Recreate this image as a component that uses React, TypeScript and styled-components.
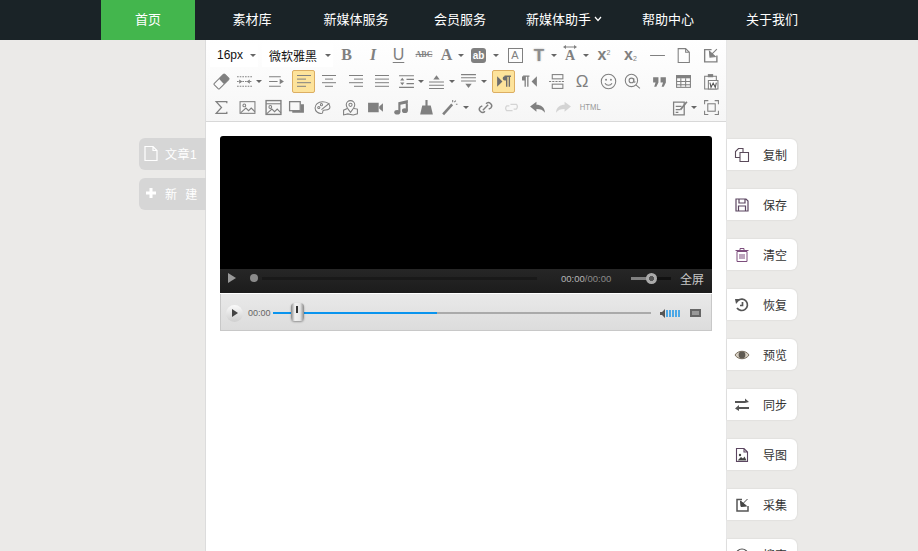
import React from 'react'
import styled, { createGlobalStyle } from 'styled-components'

const GlobalStyle = createGlobalStyle`
  html, body {
    margin: 0;
    height: 100%;
    overflow: hidden;
    background: #ebeae8;
    font-family: "Liberation Sans", "Noto Sans CJK SC", sans-serif;
  }
`

const Page = styled.div`
  height: 551px;
  overflow: hidden;
  display: flex;
  flex-direction: column;
`

const Nav = styled.nav`
  height: 40px;
  flex: none;
  background: #1a2327;
  display: flex;
  gap: 10px;
  padding-left: 101px;
`

const NavItem = styled.a<{ $active?: boolean }>`
  width: 94px;
  box-sizing: border-box;
  padding-bottom: 3px;
  display: flex;
  align-items: center;
  justify-content: center;
  gap: 3px;
  color: #fff;
  font-size: 13px;
  white-space: nowrap;
  background: ${p => (p.$active ? '#43b64d' : 'transparent')};
`

const Body = styled.div`
  flex: 1;
  display: flex;
  min-height: 0;
`

const LeftColumn = styled.div`
  width: 66px;
  padding: 98px 0 0 139px;
  display: flex;
  flex-direction: column;
  gap: 8px;
`

const DocTab = styled.div`
  width: 67px;
  height: 32px;
  z-index: 1;
  box-sizing: border-box;
  padding: 0 0 2px 4px;
  background: #d6d6d6;
  border-radius: 6px 0 0 6px;
  color: #fff;
  font-size: 12px;
  letter-spacing: 0.5px;
  display: flex;
  align-items: center;
  gap: 6px;
  white-space: pre;
`

const Editor = styled.main`
  width: 522px;
  flex: none;
  box-sizing: border-box;
  background: #fff;
  border-left: 1px solid #dcdcdc;
  border-right: 1px solid #e6e6e6;
`

const Toolbar = styled.div`
  height: 82px;
  box-sizing: border-box;
  padding: 2px 0 0 4px;
  background: linear-gradient(#fff, #f6f6f6);
  border-bottom: 1px solid #d8d8d8;
`

const ToolRow = styled.div`
  height: 26px;
  display: flex;
  align-items: center;
`

const Select = styled.div<{ $w: number; $mr?: number }>`
  width: ${p => p.$w}px;
  height: 24px;
  margin-right: ${p => p.$mr ?? 0}px;
  box-sizing: border-box;
  padding-left: 7px;
  background: #fff;
  display: flex;
  align-items: center;
  justify-content: space-between;
  font-size: 12px;
  color: #111;
`

const Slot = styled.span<{ $w: number; $active?: boolean }>`
  width: ${p => p.$w}px;
  height: 23px;
  flex: none;
  box-sizing: border-box;
  display: flex;
  align-items: center;
  justify-content: center;
  color: #808080;
  border-radius: 2px;
  background: ${p => (p.$active ? '#fde39b' : 'transparent')};
  border: ${p => (p.$active ? '1px solid #dcae63' : 'none')};
`

const Caret = styled.span<{ $w?: number }>`
  width: ${p => p.$w ?? 10}px;
  flex: none;
  display: flex;
  justify-content: center;
  &::after {
    content: '';
    border: 3px solid transparent;
    border-top: 3px solid #666;
    border-bottom: 0;
  }
`

const Gap = styled.span<{ $w: number }>`
  width: ${p => p.$w}px;
  flex: none;
`

const Letter = styled.span<{ $size?: number; $serif?: boolean; $bold?: boolean; $italic?: boolean; $under?: boolean; $strike?: boolean }>`
  font-family: ${p => (p.$serif ? '"Liberation Serif", serif' : '"Liberation Sans", sans-serif')};
  font-size: ${p => p.$size ?? 16}px;
  font-weight: ${p => (p.$bold ? 700 : 400)};
  font-style: ${p => (p.$italic ? 'italic' : 'normal')};
  text-decoration: ${p => (p.$under ? 'underline' : p.$strike ? 'line-through' : 'none')};
  text-underline-offset: 2px;
  line-height: 1;
  color: #808080;
`

const BlurT = styled(Letter)`
  color: #8c8c8c;
  text-shadow: 0 0 2px #aaa;
`

const Stack = styled.span`
  display: flex;
  flex-direction: column;
  align-items: center;
  margin-top: -3px;
`

const AbBadge = styled.span`
  width: 15px;
  height: 15px;
  border-radius: 3px;
  background: #808080;
  color: #fff;
  font-size: 10px;
  font-weight: 700;
  display: flex;
  align-items: center;
  justify-content: center;
`

const BoxedA = styled.span`
  width: 13px;
  height: 13px;
  border: 1px solid #808080;
  color: #808080;
  font-size: 11px;
  display: flex;
  align-items: center;
  justify-content: center;
`

const ScriptLetter = styled.span`
  font-size: 16px;
  font-weight: 700;
  color: #808080;
  line-height: 1;
  sup, sub {
    font-size: 7px;
    font-weight: 400;
    line-height: 0;
  }
  sup {
    vertical-align: 5px;
  }
  sub {
    vertical-align: -1px;
  }
`

const HtmlLabel = styled.span`
  font-size: 9px;
  color: #999;
  transform: scaleX(0.85);
`

const Content = styled.div`
  padding: 14px 14px 0;
`

const VideoPlayer = styled.div`
  height: 157px;
  background: #000;
  border-radius: 3px 3px 0 0;
  display: flex;
  flex-direction: column;
  justify-content: flex-end;
`

const VideoBar = styled.div`
  height: 24px;
  box-sizing: border-box;
  padding-bottom: 6px;
  background: linear-gradient(#262626, #1c1c1c);
  display: flex;
  align-items: center;
  color: #aaa;
`

const VideoPlay = styled.div`
  width: 23px;
  flex: none;
  display: flex;
  align-items: center;
  justify-content: center;
`

const Triangle = styled.span<{ $color: string; $size: number }>`
  border-style: solid;
  border-color: transparent;
  border-width: ${p => p.$size}px 0 ${p => p.$size}px ${p => Math.round(p.$size * 1.5)}px;
  border-left-color: ${p => p.$color};
`

const SeekDot = styled.span`
  width: 8px;
  height: 8px;
  margin-left: 7px;
  flex: none;
  border-radius: 50%;
  background: #8a8a8a;
`

const SeekTrack = styled.span`
  width: 275px;
  height: 3px;
  margin-left: 4px;
  flex: none;
  background: #191919;
`

const VideoTime = styled.span`
  margin-left: 24px;
  width: 70px;
  flex: none;
  font-size: 9.5px;
  color: #8a8a8a;
  b {
    color: #b5b5b5;
    font-weight: 400;
  }
`

const VideoVolume = styled.span`
  position: relative;
  width: 40px;
  height: 3px;
  flex: none;
  background: linear-gradient(to right, #808080 50%, #111 50%);
  &::after {
    content: '';
    position: absolute;
    left: 15px;
    top: -4px;
    width: 11px;
    height: 11px;
    border-radius: 50%;
    background: radial-gradient(#555 30%, #aaa 35%);
  }
`

const FullScreen = styled.span`
  margin-left: 9px;
  font-size: 12px;
  color: #c8c8c8;
`

const AudioPlayer = styled.div`
  height: 37px;
  margin-top: 1px;
  box-sizing: border-box;
  background: linear-gradient(#e9e9e9, #dcdcdc);
  border: 1px solid #c8c8c8;
  border-top: 0;
  display: flex;
  align-items: center;
  padding: 2px 0 0 5px;
`

const AudioPlay = styled.span`
  width: 17px;
  height: 17px;
  flex: none;
  border-radius: 50%;
  background: linear-gradient(#fafafa, #cfcfcf);
  display: flex;
  align-items: center;
  justify-content: center;
  padding-left: 1px;
  box-sizing: border-box;
`

const AudioTime = styled.span`
  margin-left: 5px;
  width: 25px;
  flex: none;
  font-size: 9px;
  color: #666;
`

const AudioTrack = styled.span`
  position: relative;
  width: 378px;
  height: 2px;
  flex: none;
  background: linear-gradient(to right, #0a94ee 43.4%, #aaa 43.4%);
`

const AudioHandle = styled.span`
  position: absolute;
  left: 18px;
  top: -9px;
  width: 13px;
  height: 18px;
  border-radius: 4px;
  background: linear-gradient(to right, #8a8a8a, #f2f2f2 30%, #e6e6e6 70%, #8a8a8a);
  box-shadow: 0 1px 2px rgba(0, 0, 0, 0.35);
  &::after {
    content: '';
    position: absolute;
    left: 5px;
    top: 3px;
    width: 2px;
    height: 7px;
    background: #333;
  }
`

const AudioIcon = styled.svg`
  flex: none;
  margin-left: 9px;
`

const RightColumn = styled.aside`
  padding-top: 99px;
  display: flex;
  flex-direction: column;
  gap: 19px;
`

const ActionButton = styled.div`
  width: 70px;
  height: 31px;
  flex: none;
  box-sizing: border-box;
  padding-left: 7px;
  background: #fff;
  border-radius: 0 6px 6px 0;
  box-shadow: 0 0 2px rgba(0, 0, 0, 0.12);
  display: flex;
  align-items: center;
  font-size: 12px;
  color: #333;
`

const ActionLabel = styled.span`
  margin: 0 0 1px 13px;
`

const Svg: React.FC<{ size?: number; children: React.ReactNode }> = ({ size = 17, children }) => (
  <svg width={size} height={size} viewBox="0 0 16 16" fill="none" stroke="#808080" strokeWidth="1">
    {children}
  </svg>
)

const Lines: React.FC<{ rows: [number, number][] }> = ({ rows }) => (
  <Svg size={16}>
    {rows.map(([a, b], i) => (
      <path key={i} d={`M${a} ${2.5 + i * 3.6}H${b}`} />
    ))}
  </Svg>
)

const solid = { fill: '#808080', stroke: 'none' }

const icons: Record<string, React.ReactNode> = {
  eraser: (
    <Svg>
      <g transform="rotate(-45 8 8)">
        <rect x="1" y="4.5" width="14" height="7" rx="1" />
        <rect x="8" y="4.5" width="7" height="7" rx="1" {...solid} />
      </g>
    </Svg>
  ),
  rowSpace: (
    <Svg>
      <path d="M1 3.5H15M1 12.5H15M1 8H3M6 8H10M13 8H15" strokeDasharray="1.5 1" />
      <path d="M3 6V10L6 8ZM13 6V10L10 8Z" {...solid} />
    </Svg>
  ),
  indent: (
    <Svg>
      <path d="M1 3.5H12M1 8H9M1 12.5H12" />
      <path d="M11 5.5V10.5L15 8Z" {...solid} />
    </Svg>
  ),
  alignLeft: <Lines rows={[[1, 15], [1, 10], [1, 15], [1, 10]]} />,
  alignCenter: <Lines rows={[[1, 15], [4, 12], [1, 15], [4, 12]]} />,
  alignRight: <Lines rows={[[1, 15], [6, 15], [1, 15], [6, 15]]} />,
  justify: <Lines rows={[[1, 15], [1, 15], [1, 15], [1, 15]]} />,
  lineHeight: (
    <Svg>
      <path d="M1 2.5H15M8 6H15M8 10H15M1 13.5H15" />
      <path d="M2 7L4 4.5L6 7ZM2 9L4 11.5L6 9Z" {...solid} />
    </Svg>
  ),
  spaceBefore: (
    <Svg>
      <path d="M1 8.5H15M1 11.5H15M1 14.5H15" />
      <path d="M5 6L8 2L11 6Z" {...solid} />
    </Svg>
  ),
  spaceAfter: (
    <Svg>
      <path d="M1 1.5H15M1 4.5H15M1 7.5H15" />
      <path d="M5 10L8 14L11 10Z" {...solid} />
    </Svg>
  ),
  ltr: (
    <Svg>
      <path d="M2 3V13L7 8Z" fill="#6d6d6d" stroke="none" />
      <path d="M9 3H15M11 3V13M13.5 3V13" stroke="#6d6d6d" strokeWidth="1.3" />
      <path d="M9 3H11V7H9.5A2 2 0 0 1 9 3Z" fill="#6d6d6d" stroke="none" />
    </Svg>
  ),
  rtl: (
    <Svg>
      <path d="M14 3V13L9 8Z" {...solid} />
      <path d="M1 3H7M3 3V13M5.5 3V13" strokeWidth="1.2" />
      <path d="M1 3H3V7H1.5A2 2 0 0 1 1 3Z" {...solid} />
    </Svg>
  ),
  imageCenter: (
    <Svg>
      <rect x="4" y="1.5" width="10" height="4" />
      <rect x="4" y="10.5" width="10" height="4" />
      <path d="M1 8H15" strokeDasharray="2 1" />
    </Svg>
  ),
  smile: (
    <Svg>
      <circle cx="8" cy="8" r="6.8" />
      <circle cx="5.7" cy="6.3" r=".9" {...solid} />
      <circle cx="10.3" cy="6.3" r=".9" {...solid} />
      <path d="M4.7 9.7C6 12.2 10 12.2 11.3 9.7" />
    </Svg>
  ),
  search: (
    <Svg>
      <circle cx="7" cy="7" r="5.8" />
      <circle cx="7" cy="7" r="2.2" />
      <path d="M9.2 5V8.2Q10 9.4 10.6 8M11.2 11.2L15 14.5" />
    </Svg>
  ),
  quote: (
    <Svg>
      <path d="M2 4H7V9L5 13H3L4.3 9H2ZM9 4H14V9L12 13H10L11.3 9H9Z" {...solid} />
    </Svg>
  ),
  table: (
    <Svg>
      <rect x="1.5" y="2.5" width="13" height="11" />
      <path d="M1 2H15V5H1Z" {...solid} />
      <path d="M1.5 8H14.5M1.5 11H14.5M5.5 5V13M10 5V13" />
    </Svg>
  ),
  pasteWord: (
    <Svg>
      <path d="M2.5 3H13.5V15H2.5Z" />
      <path d="M5.5 1H10.5V4H5.5Z" {...solid} />
      <path d="M6 7H15V15H6Z" fill="#fff" />
      <path d="M7.5 9L8.5 13.5L10.5 9.5L12.5 13.5L13.5 9" stroke="#555" />
    </Svg>
  ),
  minus: (
    <Svg>
      <path d="M1 8H15" />
    </Svg>
  ),
  page: (
    <Svg>
      <path d="M3 1.5H10L13.5 5V14.5H3ZM10 1.5V5H13.5" />
    </Svg>
  ),
  collect: (
    <Svg>
      <path d="M9 2.5H2.5V14H14V8" strokeWidth="1.3" />
      <path d="M14 2L9.5 6.5M7 4L7.5 9.5L12.5 9Z" {...solid} stroke="#808080" />
    </Svg>
  ),
  sigma: (
    <Svg>
      <path d="M13 4V2.5H3L8 8L3 13.5H13V12" strokeWidth="1.2" />
    </Svg>
  ),
  image: (
    <Svg>
      <rect x="1" y="2.5" width="14" height="11" />
      <circle cx="5" cy="6" r="1.3" />
      <path d="M1.5 13L6.5 8.5L9 11L11.5 8.5L15 12" />
    </Svg>
  ),
  multiImage: (
    <Svg>
      <rect x="1" y="1.5" width="14" height="13" strokeWidth="1.3" />
      <path d="M1 4.5H15" />
      <circle cx="5" cy="7.5" r="1.3" />
      <path d="M1.5 14L6.5 9.5L9 12L11.5 9.5L15 13" />
    </Svg>
  ),
  frame: (
    <Svg>
      <rect x="1.5" y="2.5" width="10" height="8.5" strokeWidth="1.2" />
      <path d="M12 5H15V13H4V11H12Z" {...solid} />
    </Svg>
  ),
  palette: (
    <Svg>
      <path d="M8 2.5C3.8 2.5 1 5.3 1 8.5C1 12 4.5 14 7.5 13.5C9 13.2 7.5 11 9 10.5C11 10 15 11 15 7.5C15 4.5 12 2.5 8 2.5Z" />
      <circle cx="4.5" cy="8" r="1" />
      <circle cx="7" cy="5.3" r="1" />
      <path d="M7 10L14.5 4" />
    </Svg>
  ),
  map: (
    <Svg>
      <path d="M5 9L1.5 10.5V15L5.5 14L10.5 15L14.5 14V9.5L11 9" />
      <path d="M8 12.5C5 9 4 7.5 4 5.5A4 4 0 0 1 12 5.5C12 7.5 11 9 8 12.5Z" />
      <circle cx="8" cy="5.5" r="1.5" />
    </Svg>
  ),
  video: (
    <Svg>
      <path d="M1 3.5H11V12.5H1ZM11.5 7L15 4V12L11.5 9Z" {...solid} />
    </Svg>
  ),
  music: (
    <Svg>
      <path d="M5 3L14 1V4L7 5.5V12.5H5ZM12 3.5H14V11H12Z" {...solid} />
      <ellipse cx="4" cy="12.5" rx="2.8" ry="2.2" {...solid} />
      <ellipse cx="11.2" cy="11" rx="2.8" ry="2.2" {...solid} />
    </Svg>
  ),
  broom: (
    <Svg>
      <path d="M7 1H9V6H12L14 14.5H2L4 6H7Z" {...solid} />
    </Svg>
  ),
  wand: (
    <Svg>
      <path d="M2 14.5L10.5 5" strokeWidth="2.4" />
      <path d="M11 1V3M14 5H15.5M12.5 3L14 1.5" />
    </Svg>
  ),
  link: (
    <Svg>
      <path d="M8.5 4.5A3 3 0 0 1 13 8.5L11 9.5M7.5 11.5A3 3 0 0 1 3 7.5L5 6.5M5.5 10.5L10.5 5.5" strokeWidth="1.3" />
    </Svg>
  ),
  unlink: (
    <svg width="17" height="17" viewBox="0 0 16 16" fill="none" stroke="#d4d4d4" strokeWidth="1.2">
      <path d="M7 5H12.5A3 3 0 0 1 12.5 9.5H10M9 11H3.5A3 3 0 0 1 3.5 6.5H6" />
    </svg>
  ),
  undo: (
    <Svg>
      <path d="M1 7L7 2.5V5.5C11 5.5 15 8 15 13C13 10.5 11 9.5 7 9.5V12Z" {...solid} />
    </Svg>
  ),
  redo: (
    <svg width="17" height="17" viewBox="0 0 16 16" fill="#d4d4d4">
      <path d="M15 7L9 2.5V5.5C5 5.5 1 8 1 13C3 10.5 5 9.5 9 9.5V12Z" />
    </svg>
  ),
  template: (
    <Svg>
      <path d="M1.5 3H11.5V15H1.5ZM3.5 7H9M3.5 10H8M3.5 12.5H6" strokeWidth="1.2" />
      <path d="M8 10L14 2.5" strokeWidth="1.6" />
    </Svg>
  ),
  fullscreen: (
    <Svg>
      <path d="M1.5 5V1.5H5M11 1.5H14.5V5M14.5 11V14.5H11M5 14.5H1.5V11" />
      <rect x="4.5" y="4.5" width="7" height="7" />
    </Svg>
  ),
}

const actionIcons: Record<string, React.ReactNode> = {
  copy: (
    <svg width="16" height="16" viewBox="0 0 16 16" fill="none" stroke="#5a4a5a" strokeWidth="1.1">
      <path d="M6.5 5.5H14.5V14.5H6V5.5ZM6 10.5H1.5V4.5L4.5 1.5H9V5.5" />
    </svg>
  ),
  save: (
    <svg width="16" height="16" viewBox="0 0 16 16" fill="none" stroke="#5b4560" strokeWidth="1.2">
      <path d="M2 2H12L14 4V14H2ZM5 2V6H11V2M4.5 14V9H11.5V14" />
    </svg>
  ),
  trash: (
    <svg width="16" height="16" viewBox="0 0 16 16" fill="none" stroke="#7c4d7c" strokeWidth="1">
      <path d="M3 4.5H13V14.5H3ZM1.5 3.5H14.5M6 3.5V1.5H10V3.5M6 7V12M8 7V12M10 7V12" />
    </svg>
  ),
  restore: (
    <svg width="16" height="16" viewBox="0 0 16 16" fill="none" stroke="#555" strokeWidth="2">
      <path d="M4 3.5A5.7 5.7 0 1 1 3 11M8.5 5V8.5H6" strokeWidth="1.7" />
      <path d="M1 2L6.5 2L2 7Z" fill="#555" stroke="none" />
    </svg>
  ),
  eye: (
    <svg width="16" height="16" viewBox="0 0 16 16">
      <path d="M1 8C4 3 12 3 15 8C12 13 4 13 1 8Z" fill="#d8d0c4" stroke="#7a7060" />
      <circle cx="8" cy="8" r="3.4" fill="#5f5a52" />
    </svg>
  ),
  sync: (
    <svg width="16" height="16" viewBox="0 0 16 16" fill="#555">
      <path d="M1 4H11V1.5L15 5L11 6H1ZM15 10H5V8L1 11.5L5 14V12H15Z" />
    </svg>
  ),
  exportImage: (
    <svg width="16" height="16" viewBox="0 0 16 16" fill="none" stroke="#5b4560" strokeWidth="1.1">
      <path d="M2.5 1.5H10L13.5 5V14.5H2.5ZM10 1.5V5H13.5" />
      <circle cx="6" cy="8" r="1.2" fill="#444" stroke="none" />
      <path d="M3.5 13.5L7 10L9 11.5L10.5 9.5L12.5 13.5Z" fill="#444" stroke="none" />
    </svg>
  ),
  collect: (
    <svg width="16" height="16" viewBox="0 0 16 16" fill="none" stroke="#555" strokeWidth="1.5">
      <path d="M8 2.5H3V14H14V9" />
      <path d="M13.5 2L9.5 6M6.5 4L7 9.5L12.5 9Z" fill="#444" stroke="#444" strokeWidth="1" />
    </svg>
  ),
  search: (
    <svg width="16" height="16" viewBox="0 0 16 16" fill="none" stroke="#555" strokeWidth="1.2">
      <circle cx="8" cy="8" r="6" />
    </svg>
  ),
}

const actions = [
  { icon: 'copy', label: '复制' },
  { icon: 'save', label: '保存' },
  { icon: 'trash', label: '清空' },
  { icon: 'restore', label: '恢复' },
  { icon: 'eye', label: '预览' },
  { icon: 'sync', label: '同步' },
  { icon: 'exportImage', label: '导图' },
  { icon: 'collect', label: '采集' },
  { icon: 'search', label: '搜索' },
]

const navItems = ['素材库', '新媒体服务', '会员服务']
const navItemsAfter = ['帮助中心', '关于我们']

const Chevron = () => (
  <svg width="8" height="6" viewBox="0 0 8 6" fill="none" stroke="#fff" strokeWidth="1.2">
    <path d="M1 1L4 4.5L7 1" />
  </svg>
)

const Tool: React.FC<{ w: number; name: string; active?: boolean }> = ({ w, name, active }) => (
  <Slot $w={w} $active={active}>{icons[name]}</Slot>
)

const App: React.FC = () => (
  <Page>
    <GlobalStyle />
    <Nav>
      <NavItem $active>首页</NavItem>
      {navItems.map(item => <NavItem key={item}>{item}</NavItem>)}
      <NavItem>新媒体助手 <Chevron /></NavItem>
      {navItemsAfter.map(item => <NavItem key={item}>{item}</NavItem>)}
    </Nav>
    <Body>
      <LeftColumn>
        <DocTab>
          <svg width="16" height="17" viewBox="0 0 16 17" fill="none" stroke="#fff" strokeWidth="1.2">
            <path d="M2 1.5H10L14 5.5V15.5H2ZM10 1.5V5.5H14" />
          </svg>
          文章1
        </DocTab>
        <DocTab>
          <svg width="16" height="16" viewBox="0 0 16 16" fill="#fff">
            <path d="M6.5 3H9.5V6.5H13V9.5H9.5V13H6.5V9.5H3V6.5H6.5Z" />
          </svg>
          新  建
        </DocTab>
      </LeftColumn>
      <Editor>
        <Toolbar>
          <ToolRow>
            <Select $w={48} $mr={4}>16px<Caret /></Select>
            <Select $w={71}>微软雅黑<Caret /></Select>
            <Slot $w={27}><Letter $serif $bold>B</Letter></Slot>
            <Slot $w={26}><Letter $serif $bold $italic>I</Letter></Slot>
            <Slot $w={25}><Letter $under>U</Letter></Slot>
            <Slot $w={26}><Letter $serif $bold $strike $size={8}>ABC</Letter></Slot>
            <Slot $w={19}><Letter $serif $bold>A</Letter></Slot>
            <Caret />
            <Slot $w={25}><AbBadge>ab</AbBadge></Slot>
            <Caret />
            <Slot $w={28}><BoxedA>A</BoxedA></Slot>
            <Slot $w={20}><BlurT $bold $size={17}>T</BlurT></Slot>
            <Caret />
            <Slot $w={22}>
              <Stack>
                <svg width="14" height="4" viewBox="0 0 14 4" fill="#808080">
                  <path d="M0 2L3 0V1.5H11V0L14 2L11 4V2.5H3V4Z" />
                </svg>
                <Letter $bold $serif $size={14}>A</Letter>
              </Stack>
            </Slot>
            <Caret />
            <Slot $w={26}><ScriptLetter>x<sup>2</sup></ScriptLetter></Slot>
            <Slot $w={27}><ScriptLetter>x<sub>2</sub></ScriptLetter></Slot>
            <Tool w={26} name="minus" />
            <Tool w={27} name="page" />
            <Tool w={26} name="collect" />
          </ToolRow>
          <ToolRow>
            <Tool w={22} name="eraser" />
            <Tool w={24} name="rowSpace" />
            <Caret $w={6} />
            <Tool w={28} name="indent" />
            <Gap $w={2} />
            <Tool w={23} name="alignLeft" active />
            <Tool w={28} name="alignCenter" />
            <Tool w={26} name="alignRight" />
            <Tool w={26} name="justify" />
            <Tool w={22} name="lineHeight" />
            <Caret $w={8} />
            <Tool w={22} name="spaceBefore" />
            <Caret />
            <Tool w={22} name="spaceAfter" />
            <Caret />
            <Gap $w={3} />
            <Tool w={23} name="ltr" active />
            <Tool w={30} name="rtl" />
            <Tool w={22} name="imageCenter" />
            <Slot $w={30}><Letter $size={17}>Ω</Letter></Slot>
            <Tool w={22} name="smile" />
            <Tool w={26} name="search" />
            <Tool w={28} name="quote" />
            <Tool w={20} name="table" />
            <Tool w={34} name="pasteWord" />
          </ToolRow>
          <ToolRow>
            <Tool w={22} name="sigma" />
            <Tool w={30} name="image" />
            <Tool w={22} name="multiImage" />
            <Tool w={24} name="frame" />
            <Tool w={28} name="palette" />
            <Tool w={28} name="map" />
            <Tool w={22} name="video" />
            <Tool w={30} name="music" />
            <Tool w={20} name="broom" />
            <Tool w={26} name="wand" />
            <Caret $w={8} />
            <Tool w={30} name="link" />
            <Tool w={22} name="unlink" />
            <Tool w={30} name="undo" />
            <Tool w={22} name="redo" />
            <Slot $w={32}><HtmlLabel>HTML</HtmlLabel></Slot>
            <Gap $w={65} />
            <Tool w={18} name="template" />
            <Caret />
            <Tool w={24} name="fullscreen" />
          </ToolRow>
        </Toolbar>
        <Content>
          <VideoPlayer>
            <VideoBar>
              <VideoPlay><Triangle $color="#999" $size={5} /></VideoPlay>
              <SeekDot />
              <SeekTrack />
              <VideoTime><b>00:00</b>/00:00</VideoTime>
              <VideoVolume />
              <FullScreen>全屏</FullScreen>
            </VideoBar>
          </VideoPlayer>
          <AudioPlayer>
            <AudioPlay><Triangle $color="#444" $size={4} /></AudioPlay>
            <AudioTime>00:00</AudioTime>
            <AudioTrack><AudioHandle /></AudioTrack>
            <AudioIcon width="21" height="9" viewBox="0 0 21 9">
              <path d="M0 3H2L5 0V9L2 6H0Z" fill="#555" />
              <path d="M7 1V8M10 1V8M13 1V8M16 1V8M19 1V8" stroke="#1b95e8" strokeWidth="1.5" />
            </AudioIcon>
            <AudioIcon width="11" height="8" viewBox="0 0 11 8">
              <rect width="11" height="8" fill="#666" />
              <rect x="2" y="2" width="7" height="4" fill="#999" />
            </AudioIcon>
          </AudioPlayer>
        </Content>
      </Editor>
      <RightColumn>
        {actions.map(a => (
          <ActionButton key={a.label}>
            {actionIcons[a.icon]}
            <ActionLabel>{a.label}</ActionLabel>
          </ActionButton>
        ))}
      </RightColumn>
    </Body>
  </Page>
)

export default App
